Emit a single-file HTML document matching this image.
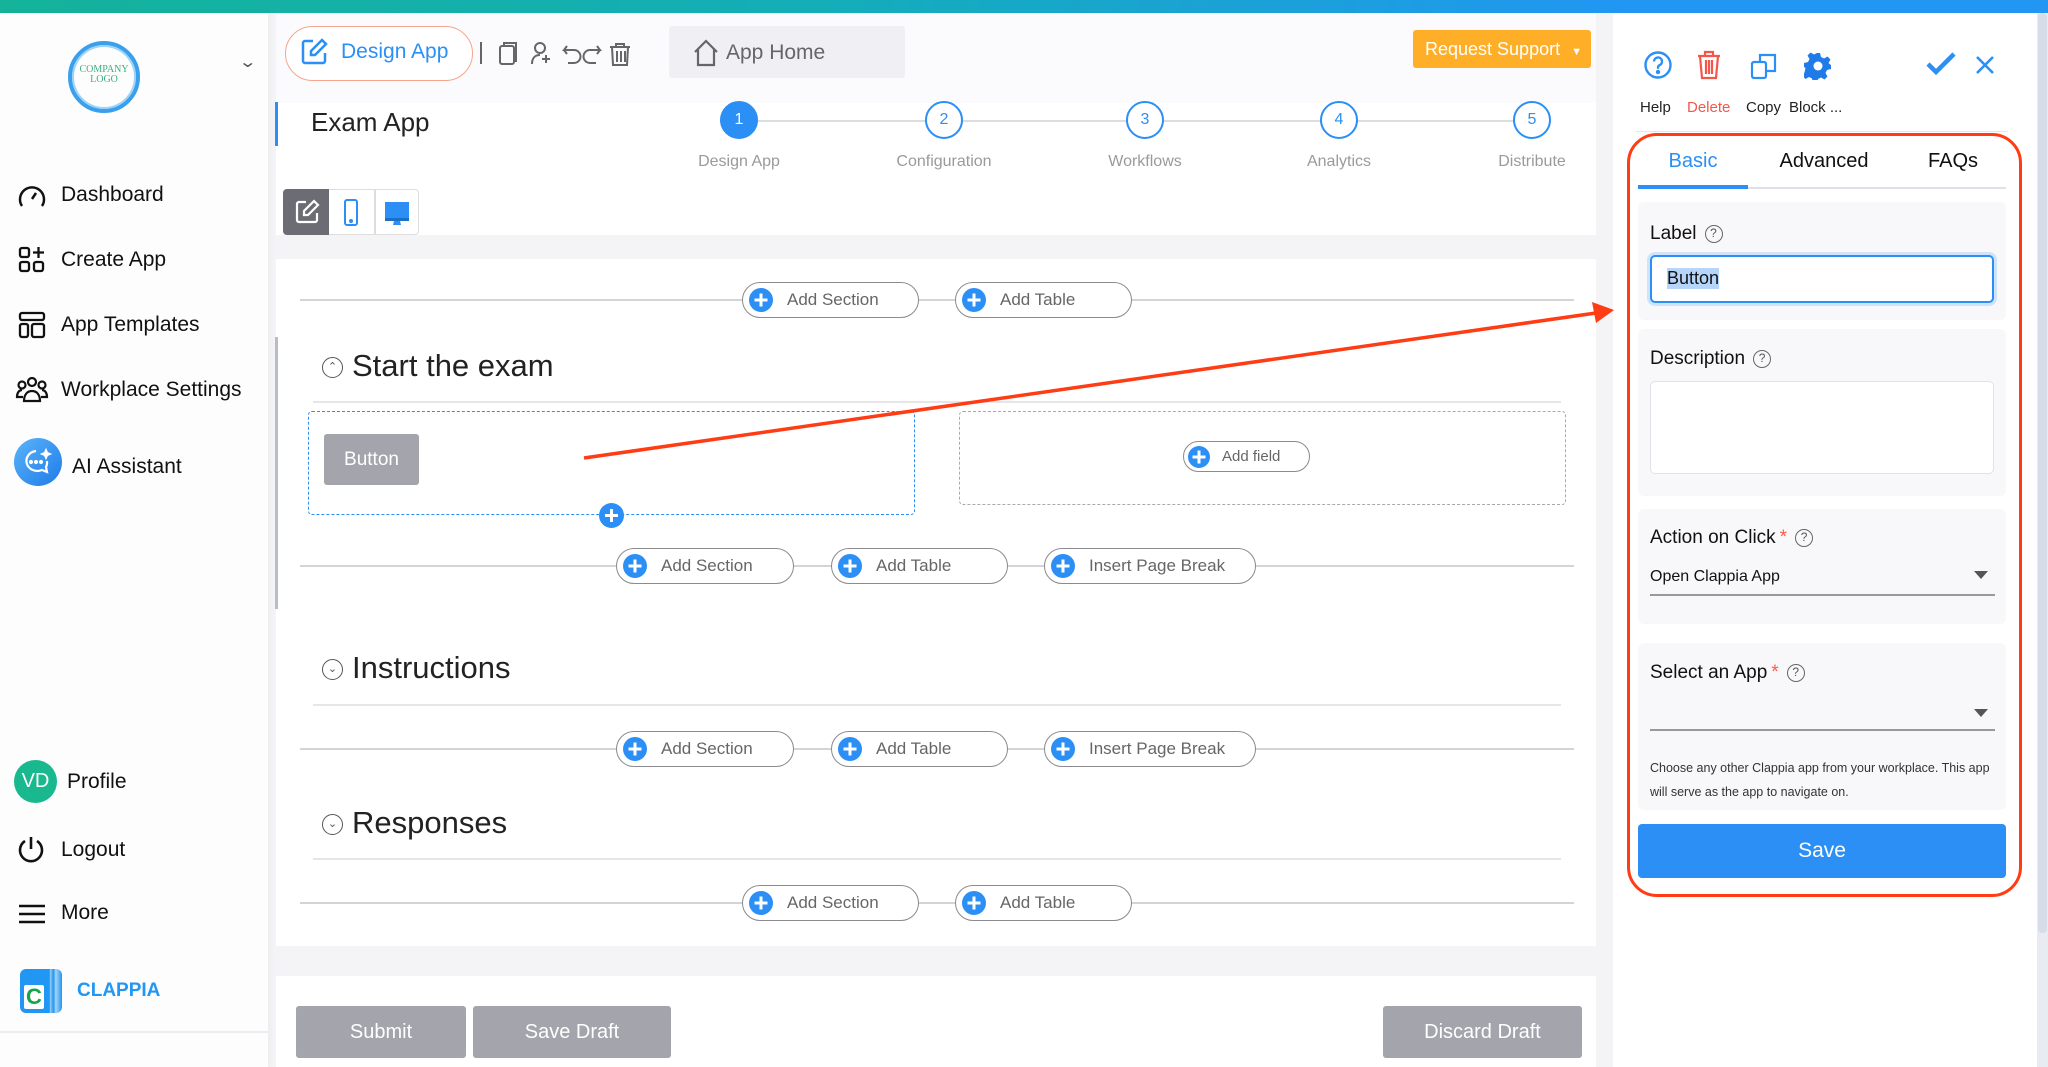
<!DOCTYPE html>
<html><head><meta charset="utf-8">
<style>
*{box-sizing:border-box;margin:0;padding:0}
body{width:2048px;height:1067px;overflow:hidden;background:#f4f4f7;font-family:"Liberation Sans",sans-serif;position:relative;color:#222}
.a{position:absolute}
.topbar{left:0;top:0;width:2048px;height:13px;background:linear-gradient(90deg,#14b39a,#13aeb8 40%,#2196f3 80%,#2196f3)}
.side{left:0;top:13px;width:268px;height:1054px;background:#fdfdfe;box-shadow:2px 0 6px rgba(0,0,0,.04)}
.nav{left:61px;font-size:21px;color:#111;line-height:24px}
.ico{left:16px}
.pill{position:absolute;height:36px;border:1.5px solid #8a8a8f;border-radius:19px;background:#fff;font-size:17px;color:#666;display:flex;align-items:center;padding-left:6px}
.pill .p{width:24px;height:24px;border-radius:50%;background:#2b8ff5;position:relative;margin-right:14px;flex:none}
.p:before,.p:after{content:"";position:absolute;background:#fff;left:50%;top:50%;transform:translate(-50%,-50%)}
.p:before{width:13px;height:3px}.p:after{width:3px;height:13px}
.hl{position:absolute;height:2px;background:#d4d4d8}
.sec{position:absolute;font-size:31px;color:#222}
.chev{position:absolute;width:21px;height:21px;border:1.5px solid #555;border-radius:50%;font-size:11px;text-align:center;line-height:18px;color:#555}
.step{position:absolute;width:38px;height:38px;border:2.5px solid #2b8ff5;border-radius:50%;color:#2b8ff5;font-size:16px;text-align:center;line-height:33px;background:#fff}
.sl{position:absolute;font-size:16px;color:#9a9a9a;width:140px;text-align:center}
.gbtn{position:absolute;height:52px;background:#a3a4ac;border-radius:3px;color:#fff;font-size:20px;text-align:center;line-height:52px}
.box{position:absolute;background:#f8f8fb;border-radius:6px}
.lab{position:absolute;font-size:19px;color:#111}
.q{display:inline-block;width:18px;height:18px;border:1.5px solid #666;border-radius:50%;font-size:12px;text-align:center;line-height:15px;color:#555;vertical-align:middle;margin-left:8px}
.star{color:#ff5a4a;margin-left:4px}
</style></head><body>
<div class="a topbar"></div>

<!-- sidebar -->
<div class="a side"></div>
<div class="a" style="left:68px;top:41px;width:72px;height:72px;border-radius:50%;border:4px solid #3aa0ee;box-shadow:inset 0 0 0 2px #9fd3f7"></div>
<div class="a" style="left:68px;top:65px;width:72px;text-align:center;font-family:'Liberation Serif',serif;font-size:10px;line-height:10px;color:#3ab17e">COMPANY<br>LOGO</div>
<div class="a" style="left:241px;top:52px;font-size:16px;color:#555;transform:scaleX(1.4)">⌄</div>

<svg class="a" style="left:16px;top:181px" width="32" height="28" viewBox="0 0 32 28" fill="none" stroke="#111" stroke-width="2.5"><path d="M6 25 A12 12 0 1 1 26 25"/><path d="M16 18 L20 12"/></svg>
<div class="a nav" style="top:183px">Dashboard</div>
<svg class="a" style="left:18px;top:246px" width="28" height="28" viewBox="0 0 28 28" fill="none" stroke="#111" stroke-width="2.3"><rect x="2" y="2" width="9" height="9" rx="2"/><rect x="2" y="16" width="9" height="9" rx="2"/><rect x="16" y="16" width="9" height="9" rx="2"/><path d="M20.5 1v11M15 6.5h11"/></svg>
<div class="a nav" style="top:248px">Create App</div>
<svg class="a" style="left:18px;top:311px" width="28" height="28" viewBox="0 0 28 28" fill="none" stroke="#111" stroke-width="2.3"><rect x="2" y="2" width="24" height="7" rx="2"/><rect x="2" y="13" width="8" height="13" rx="2"/><rect x="14" y="13" width="12" height="13" rx="2"/></svg>
<div class="a nav" style="top:313px">App Templates</div>
<svg class="a" style="left:15px;top:376px" width="34" height="28" viewBox="0 0 34 28" fill="none" stroke="#111" stroke-width="2.2"><circle cx="17" cy="6" r="4"/><circle cx="7" cy="9" r="3.5"/><circle cx="27" cy="9" r="3.5"/><path d="M9 25c0-6 3-10 8-10s8 4 8 10z"/><path d="M8 21H2c0-4 2-7 5-7M26 21h6c0-4-2-7-5-7"/></svg>
<div class="a nav" style="top:378px">Workplace Settings</div>
<div class="a" style="left:14px;top:438px;width:48px;height:48px;border-radius:50%;background:linear-gradient(135deg,#5ab4fa,#1f7be8)"></div>
<svg class="a" style="left:22px;top:447px" width="32" height="30" viewBox="0 0 32 30" fill="none" stroke="#fff" stroke-width="2.2"><path d="M14 4a11 10 0 1 0 6 19l5 2-1-5a10 10 0 0 0 1-6"/><circle cx="9" cy="15" r="1" fill="#fff"/><circle cx="14" cy="15" r="1" fill="#fff"/><circle cx="19" cy="15" r="1" fill="#fff"/><path d="M24 2l1.5 3.5L29 7l-3.5 1.5L24 12l-1.5-3.5L19 7l3.5-1.5z" fill="#fff" stroke-width="1"/></svg>
<div class="a nav" style="left:72px;top:455px">AI Assistant</div>

<div class="a" style="left:14px;top:760px;width:43px;height:43px;border-radius:50%;background:#19b88f;color:#fff;font-size:20px;text-align:center;line-height:43px">VD</div>
<div class="a nav" style="left:67px;top:770px">Profile</div>
<svg class="a" style="left:16px;top:835px" width="30" height="30" viewBox="0 0 30 30" fill="none" stroke="#111" stroke-width="2.6"><path d="M9 6a11 11 0 1 0 12 0"/><path d="M15 2v12"/></svg>
<div class="a nav" style="top:838px">Logout</div>
<svg class="a" style="left:18px;top:903px" width="28" height="22" viewBox="0 0 28 22" stroke="#111" stroke-width="2.5"><path d="M1 3h26M1 11h26M1 19h26"/></svg>
<div class="a nav" style="top:901px">More</div>
<div class="a" style="left:20px;top:969px;width:42px;height:44px;border-radius:6px;background:linear-gradient(90deg,#2196f3 70%,#8ccaf7 72%,#2196f3 80%,#a6d5f8 85%,#2196f3)"></div>
<div class="a" style="left:24px;top:985px;width:20px;height:24px;background:#fff;border-radius:2px;color:#18a54a;font-weight:bold;font-size:22px;line-height:24px;text-align:center">C</div>
<div class="a" style="left:77px;top:980px;font-size:19px;font-weight:bold;color:#2196f3">CLAPPIA</div>
<div class="a" style="left:0;top:1031px;width:268px;height:2px;background:#ececf0"></div>

<!-- toolbar -->
<div class="a" style="left:276px;top:13px;width:1320px;height:90px;background:#fbfbfd"></div>
<div class="a" style="left:285px;top:26px;width:188px;height:55px;border:1.5px solid #f5a58e;border-radius:28px;background:#fff"></div>
<svg class="a" style="left:300px;top:38px" width="28" height="28" viewBox="0 0 28 28" fill="none" stroke="#2b8ff5" stroke-width="2.5"><path d="M13 3H5a2 2 0 0 0-2 2v18a2 2 0 0 0 2 2h18a2 2 0 0 0 2-2v-8"/><path d="M22 2l4 4-11 11h-4v-4z"/></svg>
<div class="a" style="left:341px;top:40px;font-size:21px;color:#2b8ff5">Design App</div>
<div class="a" style="left:480px;top:42px;width:2px;height:22px;background:#666"></div>
<svg class="a" style="left:496px;top:40px" width="150" height="28" viewBox="0 0 150 28" fill="none" stroke="#666" stroke-width="2"><rect x="4" y="6" width="14" height="18" rx="2"/><path d="M8 6V3h12v18h-2"/><circle cx="44" cy="8" r="5"/><path d="M36 24c0-6 3-9 8-9M50 15v8M46 19h8"/><path d="M78 10h-10l3-4M68 10l3 4M68 10h10a6 6 0 0 1 0 13h-6"/><path d="M94 10h10l-3-4M104 10l-3 4M104 10H94a6 6 0 0 0 0 13h6"/><path d="M114 7h20M120 7V4h8v3M116 7l1 18h14l1-18M121 11v11M125 11v11M129 11v11"/></svg>
<div class="a" style="left:669px;top:26px;width:236px;height:52px;background:#f0f0f4;border-radius:3px"></div>
<svg class="a" style="left:692px;top:38px" width="28" height="30" viewBox="0 0 28 30" fill="none" stroke="#666" stroke-width="2.2"><path d="M3 14L14 3l11 11M6 11v16h16V11"/></svg>
<div class="a" style="left:726px;top:41px;font-size:21px;color:#666">App Home</div>
<div class="a" style="left:1413px;top:30px;width:178px;height:38px;background:#ffae27;border-radius:3px;color:#fff;font-size:18px;line-height:38px;padding-left:12px">Request Support <span style="font-size:11px;margin-left:6px">▼</span></div>

<!-- header card -->
<div class="a" style="left:276px;top:103px;width:1320px;height:132px;background:#fff"></div>
<div class="a" style="left:275px;top:102px;width:3px;height:44px;background:#2b8ff5"></div>
<div class="a" style="left:311px;top:107px;font-size:26px;color:#222">Exam App</div>
<div class="a" style="left:758px;top:120px;width:762px;height:1.5px;background:#ddd"></div>
<div class="step" style="left:720px;top:101px;background:#2b8ff5;color:#fff">1</div>
<div class="step" style="left:925px;top:101px">2</div>
<div class="step" style="left:1126px;top:101px">3</div>
<div class="step" style="left:1320px;top:101px">4</div>
<div class="step" style="left:1513px;top:101px">5</div>
<div class="sl" style="left:669px;top:153px">Design App</div>
<div class="sl" style="left:874px;top:153px">Configuration</div>
<div class="sl" style="left:1075px;top:153px">Workflows</div>
<div class="sl" style="left:1269px;top:153px">Analytics</div>
<div class="sl" style="left:1462px;top:153px">Distribute</div>
<div class="a" style="left:283px;top:189px;width:136px;height:46px;border:1.5px solid #ddd;border-radius:4px;background:#fff"></div>
<div class="a" style="left:283px;top:189px;width:46px;height:46px;background:#6c6d74;border-radius:4px 0 0 4px"></div>
<svg class="a" style="left:294px;top:199px" width="26" height="26" viewBox="0 0 26 26" fill="none" stroke="#fff" stroke-width="2.2"><path d="M12 3H5a2 2 0 0 0-2 2v16a2 2 0 0 0 2 2h16a2 2 0 0 0 2-2v-7"/><path d="M20 2l4 4-10 10h-4v-4z"/></svg>
<div class="a" style="left:374px;top:189px;width:1.5px;height:46px;background:#ddd"></div>
<svg class="a" style="left:343px;top:199px" width="16" height="28" viewBox="0 0 16 28" fill="none" stroke="#2b8ff5" stroke-width="2"><rect x="2" y="1" width="12" height="25" rx="2"/><circle cx="8" cy="22" r="1" fill="#2b8ff5"/></svg>
<svg class="a" style="left:383px;top:200px" width="28" height="26" viewBox="0 0 28 26"><rect x="2" y="2" width="24" height="16" fill="#2b8ff5"/><rect x="2" y="18" width="24" height="3" fill="#1a6fc8"/><path d="M10 25h8l-1-4h-6z" fill="#2b8ff5"/></svg>

<!-- form card -->
<div class="a" style="left:276px;top:259px;width:1320px;height:687px;background:#fff"></div>
<div class="a" style="left:275px;top:337px;width:3px;height:272px;background:#b8bcc6"></div>

<div class="hl" style="left:300px;top:299px;width:1274px"></div>
<div class="pill" style="left:742px;top:282px;width:177px"><span class="p"></span>Add Section</div>
<div class="pill" style="left:955px;top:282px;width:177px"><span class="p"></span>Add Table</div>

<div class="chev" style="left:322px;top:357px">⌃</div>
<div class="sec" style="left:352px;top:348px">Start the exam</div>
<div class="hl" style="left:313px;top:401px;width:1248px;background:#e6e6ea"></div>
<div class="a" style="left:308px;top:411px;width:607px;height:104px;border:1.5px dashed #2b8ff5;border-radius:4px"></div>
<div class="a" style="left:324px;top:434px;width:95px;height:51px;background:#a3a4ac;border-radius:3px;color:#fff;font-size:19px;text-align:center;line-height:51px">Button</div>
<div class="a" style="left:599px;top:503px;width:25px;height:25px;border-radius:50%;background:#2b8ff5"></div>
<div class="a" style="left:605px;top:514px;width:13px;height:3px;background:#fff"></div>
<div class="a" style="left:610px;top:509px;width:3px;height:13px;background:#fff"></div>
<div class="a" style="left:959px;top:411px;width:607px;height:94px;border:1.5px dashed #aaa;border-radius:4px"></div>
<div class="pill" style="left:1183px;top:441px;width:127px;height:31px;font-size:15px;padding-left:4px"><span class="p" style="width:22px;height:22px;margin-right:12px"></span>Add field</div>

<div class="hl" style="left:300px;top:565px;width:1274px"></div>
<div class="pill" style="left:616px;top:548px;width:178px"><span class="p"></span>Add Section</div>
<div class="pill" style="left:831px;top:548px;width:177px"><span class="p"></span>Add Table</div>
<div class="pill" style="left:1044px;top:548px;width:212px"><span class="p"></span>Insert Page Break</div>

<div class="chev" style="left:322px;top:659px">⌄</div>
<div class="sec" style="left:352px;top:650px">Instructions</div>
<div class="hl" style="left:313px;top:704px;width:1248px;background:#e6e6ea"></div>

<div class="hl" style="left:300px;top:748px;width:1274px"></div>
<div class="pill" style="left:616px;top:731px;width:178px"><span class="p"></span>Add Section</div>
<div class="pill" style="left:831px;top:731px;width:177px"><span class="p"></span>Add Table</div>
<div class="pill" style="left:1044px;top:731px;width:212px"><span class="p"></span>Insert Page Break</div>

<div class="chev" style="left:322px;top:814px">⌄</div>
<div class="sec" style="left:352px;top:805px">Responses</div>
<div class="hl" style="left:313px;top:858px;width:1248px;background:#e6e6ea"></div>

<div class="hl" style="left:300px;top:902px;width:1274px"></div>
<div class="pill" style="left:742px;top:885px;width:177px"><span class="p"></span>Add Section</div>
<div class="pill" style="left:955px;top:885px;width:177px"><span class="p"></span>Add Table</div>

<!-- footer -->
<div class="a" style="left:276px;top:976px;width:1320px;height:91px;background:#fff"></div>
<div class="gbtn" style="left:296px;top:1006px;width:170px">Submit</div>
<div class="gbtn" style="left:473px;top:1006px;width:198px">Save Draft</div>
<div class="gbtn" style="left:1383px;top:1006px;width:199px">Discard Draft</div>

<!-- right panel -->
<div class="a" style="left:1613px;top:13px;width:424px;height:1054px;background:#fff"></div>
<div class="a" style="left:2037px;top:13px;width:11px;height:1054px;background:#e8ecf2"></div>
<div class="a" style="left:2038px;top:13px;width:9px;height:920px;background:#d6dde8;border-radius:4px"></div>
<svg class="a" style="left:1643px;top:50px" width="30" height="30" viewBox="0 0 30 30" fill="none" stroke="#2b8ff5" stroke-width="2.4"><circle cx="15" cy="15" r="12.5"/><path d="M11 11.5a4 4 0 1 1 5.5 3.7c-1 .5-1.5 1.3-1.5 2.5v1"/><circle cx="15" cy="22" r="1" fill="#2b8ff5"/></svg>
<svg class="a" style="left:1696px;top:50px" width="26" height="30" viewBox="0 0 26 30" fill="none" stroke="#f4574a" stroke-width="2.2"><path d="M2 6h22M9 6V2h8v4M4 6l2 22h14l2-22M10 10v14M13 10v14M16 10v14"/></svg>
<svg class="a" style="left:1750px;top:52px" width="28" height="28" viewBox="0 0 28 28" fill="none" stroke="#2b8ff5" stroke-width="2.2"><rect x="2" y="10" width="14" height="16" rx="2"/><path d="M10 10V3h15v16h-9"/></svg>
<svg class="a" style="left:1804px;top:52px" width="28" height="28" viewBox="0 0 28 28"><path fill="#1f7be8" d="M12 1h4l1 4 3 1.5 3.5-2 3 3-2 3.5L25.5 12l1.5 1v4l-4 1-1.5 3 2 3.5-3 3-3.5-2-3 1.5-1 3.5h-4l-1-4-3-1.5-3.5 2-3-3 2-3.5L1.5 16 0 15v-4l4-1 1.5-3-2-3.5 3-3 3.5 2 3-1.5z"/><circle cx="14" cy="14" r="4.5" fill="#fff"/></svg>
<svg class="a" style="left:1926px;top:52px" width="30" height="24" viewBox="0 0 30 24" fill="none" stroke="#2b8ff5" stroke-width="4.5"><path d="M2 12l8 8L28 2"/></svg>
<svg class="a" style="left:1975px;top:55px" width="20" height="20" viewBox="0 0 20 20" stroke="#2b8ff5" stroke-width="2.6"><path d="M2 2l16 16M18 2L2 18"/></svg>
<div class="a" style="left:1640px;top:99px;font-size:15px;color:#222">Help</div>
<div class="a" style="left:1687px;top:99px;font-size:15px;color:#f4574a">Delete</div>
<div class="a" style="left:1746px;top:99px;font-size:15px;color:#222">Copy</div>
<div class="a" style="left:1789px;top:99px;font-size:15px;color:#222">Block ...</div>
<div class="a" style="left:1636px;top:131px;width:372px;height:1px;background:#e6e6ea"></div>

<div class="a" style="left:1627px;top:133px;width:395px;height:764px;border:3px solid #ff3c14;border-radius:30px"></div>
<div class="a" style="left:1638px;top:150px;width:110px;text-align:center;font-size:20px;color:#2b8ff5">Basic</div>
<div class="a" style="left:1766px;top:150px;width:116px;text-align:center;font-size:20px;color:#111">Advanced</div>
<div class="a" style="left:1900px;top:150px;width:106px;text-align:center;font-size:20px;color:#111">FAQs</div>
<div class="a" style="left:1638px;top:187px;width:368px;height:1.5px;background:#e0e0e6"></div>
<div class="a" style="left:1638px;top:185px;width:110px;height:4px;background:#2b8ff5"></div>

<div class="box" style="left:1638px;top:202px;width:368px;height:118px"></div>
<div class="lab" style="left:1650px;top:223px">Label<span class="q">?</span></div>
<div class="a" style="left:1650px;top:255px;width:344px;height:48px;border:2px solid #2b8ff5;border-radius:5px;background:#fff;box-shadow:0 0 0 3px #cfe4fb"></div>
<div class="a" style="left:1667px;top:268px;font-size:18px;color:#111;background:#b5d5fb">Button</div>

<div class="box" style="left:1638px;top:329px;width:368px;height:167px"></div>
<div class="lab" style="left:1650px;top:348px">Description<span class="q">?</span></div>
<div class="a" style="left:1650px;top:381px;width:344px;height:93px;border:1px solid #e2e2e6;border-radius:5px;background:#fff"></div>

<div class="box" style="left:1638px;top:509px;width:368px;height:115px"></div>
<div class="lab" style="left:1650px;top:527px">Action on Click<span class="star">*</span><span class="q">?</span></div>
<div class="a" style="left:1650px;top:568px;font-size:16px;color:#111">Open Clappia App</div>
<div class="a" style="left:1974px;top:571px;width:0;height:0;border-left:7px solid transparent;border-right:7px solid transparent;border-top:8px solid #555"></div>
<div class="a" style="left:1650px;top:594px;width:345px;height:2px;background:#999"></div>

<div class="box" style="left:1638px;top:643px;width:368px;height:167px"></div>
<div class="lab" style="left:1650px;top:662px">Select an App<span class="star">*</span><span class="q">?</span></div>
<div class="a" style="left:1974px;top:709px;width:0;height:0;border-left:7px solid transparent;border-right:7px solid transparent;border-top:8px solid #555"></div>
<div class="a" style="left:1650px;top:729px;width:345px;height:2px;background:#999"></div>
<div class="a" style="left:1650px;top:756px;width:345px;font-size:12.5px;color:#333;line-height:24px">Choose any other Clappia app from your workplace. This app will serve as the app to navigate on.</div>

<div class="a" style="left:1638px;top:824px;width:368px;height:54px;background:#2b8ff5;border-radius:4px;color:#fff;font-size:21px;text-align:center;line-height:54px">Save</div>

<!-- red arrow -->
<svg class="a" style="left:0;top:0" width="2048" height="1067" viewBox="0 0 2048 1067"><path d="M584 458L1596 313" stroke="#ff3c14" stroke-width="3.5"/><path d="M1614 310L1592 302l4 21z" fill="#ff3c14"/></svg>
</body></html>
